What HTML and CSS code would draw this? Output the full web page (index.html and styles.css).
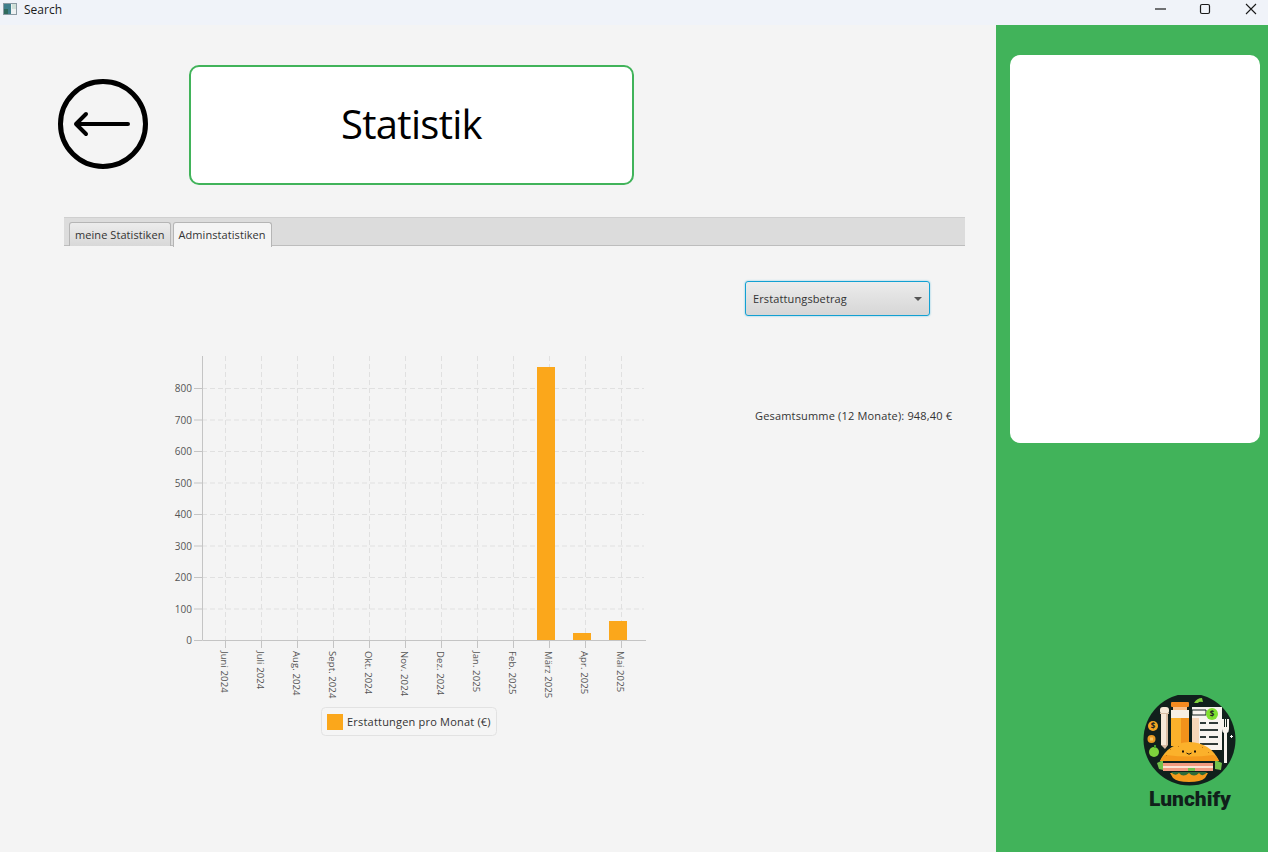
FILE: index.html
```html
<!DOCTYPE html>
<html lang="de">
<head>
  <meta charset="UTF-8">
  <title>Search</title>
  <link rel="stylesheet" href="styles.css">
</head>
<body>
  <!-- Title bar -->
  <div class="titlebar">
    <svg class="app-icon" width="16" height="16" viewBox="0 0 16 16">
      <rect x="2.500" y="2.500" width="13" height="11" fill="#eef1f2" stroke="#8b9aa3"/>
      <rect x="3" y="3" width="7" height="10" fill="#3f7f8c"/>
      <rect x="3" y="8" width="4" height="5" fill="#2f6a5c"/>
      <rect x="11" y="3" width="4" height="5" fill="#cfe0d8"/>
    </svg>
    <span class="app-title">Search</span>
    <div class="window-btns">
      <svg class="win-btn" width="46" height="18" viewBox="0 0 46 18"><path d="M25 9h11" stroke="#1a1a1a" stroke-width="1.200" fill="none"/></svg>
      <svg class="win-btn" width="46" height="18" viewBox="0 0 46 18"><rect x="24.500" y="4.500" width="9" height="9" rx="1.500" stroke="#1a1a1a" stroke-width="1.200" fill="none"/></svg>
      <svg class="win-btn" width="46" height="18" viewBox="0 0 46 18"><path d="M24 4l10 10M34 4L24 14" stroke="#1a1a1a" stroke-width="1.100" fill="none"/></svg>
    </div>
  </div>

  <div class="app">
    <main class="main">
      <!-- Header -->
      <header class="head">
        <svg class="back" width="92" height="92" viewBox="0 0 92 92">
          <circle cx="46" cy="46" r="42.500" fill="none" stroke="#000" stroke-width="5"/>
          <path d="M19 46H71M29 36L19 46L29 56" fill="none" stroke="#000" stroke-width="4" stroke-linecap="round" stroke-linejoin="round"/>
        </svg>
        <div class="title-box">Statistik</div>
      </header>

      <!-- Tabs -->
      <div class="tabs">
        <div class="tab">meine Statistiken</div>
        <div class="tab active">Adminstatistiken</div>
      </div>

      <div class="pane">
        <!-- Chart -->
        <svg class="chart" width="490" height="400" viewBox="0 0 490 400">
          <g class="grid">
            <path d="M45 260H487M45 228.500H487M45 197H487M45 165.500H487M45 134H487M45 102.500H487M45 71H487M45 39.500H487"/>
            <path d="M68.500 7V291M104.500 7V291M140.500 7V291M176.500 7V291M212.500 7V291M248.500 7V291M284.500 7V291M320.500 7V291M356.500 7V291M392.500 7V291M428.500 7V291M464.500 7V291"/>
          </g>
          <g class="axis">
            <path d="M45.500 7V291.500H489"/>
            <path d="M37 291.500h8M37 260h8M37 228.500h8M37 197h8M37 165.500h8M37 134h8M37 102.500h8M37 71h8M37 39.500h8"/>
            <path d="M68.500 291v8M104.500 291v8M140.500 291v8M176.500 291v8M212.500 291v8M248.500 291v8M284.500 291v8M320.500 291v8M356.500 291v8M392.500 291v8M428.500 291v8M464.500 291v8"/>
          </g>
          <rect class="bar" x="380" y="18" width="18" height="273"/>
          <rect class="bar" x="416" y="284" width="18" height="7"/>
          <rect class="bar" x="452" y="272" width="18" height="19"/>
          <g class="y-labels">
            <text x="35" y="295">0</text>
            <text x="35" y="263.500">100</text>
            <text x="35" y="232">200</text>
            <text x="35" y="200.500">300</text>
            <text x="35" y="169">400</text>
            <text x="35" y="137.500">500</text>
            <text x="35" y="106">600</text>
            <text x="35" y="74.500">700</text>
            <text x="35" y="43">800</text>
          </g>
          <g class="x-labels">
            <text transform="translate(64 302) rotate(90)">Juni 2024</text>
            <text transform="translate(100 302) rotate(90)">Juli 2024</text>
            <text transform="translate(136 302) rotate(90)">Aug. 2024</text>
            <text transform="translate(172 302) rotate(90)">Sept. 2024</text>
            <text transform="translate(208 302) rotate(90)">Okt. 2024</text>
            <text transform="translate(244 302) rotate(90)">Nov. 2024</text>
            <text transform="translate(280 302) rotate(90)">Dez. 2024</text>
            <text transform="translate(316 302) rotate(90)">Jan. 2025</text>
            <text transform="translate(352 302) rotate(90)">Feb. 2025</text>
            <text transform="translate(388 302) rotate(90)">März 2025</text>
            <text transform="translate(424 302) rotate(90)">Apr. 2025</text>
            <text transform="translate(460 302) rotate(90)">Mai 2025</text>
          </g>
          <rect class="legend" x="164.500" y="358.500" width="175" height="28" rx="4"/>
          <rect class="bar" x="170" y="365" width="16" height="16"/>
          <text class="legend-text" x="190" y="377">Erstattungen pro Monat (€)</text>
        </svg>

        <div class="side">
          <div class="select">
            <span>Erstattungsbetrag</span>
            <i class="caret"></i>
          </div>
          <p class="total">Gesamtsumme (12 Monate): 948,40 €</p>
        </div>
      </div>
    </main>

    <aside class="sidebar">
      <div class="card"></div>
      <div class="logo">
        <svg width="96" height="92" viewBox="0 0 96 92">
          <circle cx="47.500" cy="44.500" r="46" fill="#11201c"/>
          <!-- leaf on top -->
          <path d="M52 8q3-5 8-5l1 4q-4-1-5 1z" fill="#7ed23c"/>
          <!-- bottle -->
          <rect x="29" y="7" width="18" height="5" rx="1" fill="#f58a1f"/>
          <rect x="31" y="12" width="14" height="4" fill="#f9c08a"/>
          <rect x="29" y="15" width="18" height="8" fill="#f7efe4"/>
          <rect x="29" y="23" width="18" height="28" fill="#fbb12b"/>
          <rect x="39" y="23" width="8" height="28" fill="#f2921b"/>
          <!-- straw -->
          <rect x="18" y="12" width="9" height="7" rx="3" fill="#f6ead9"/>
          <rect x="19" y="19" width="7" height="31" fill="#f6ead9"/>
          <rect x="24" y="19" width="2" height="31" fill="#d9bfa5"/>
          <path d="M19 50h7l-3 4z" fill="#d9bfa5"/>
          <rect x="18" y="18" width="9" height="1" fill="#d9bfa5"/>
          <!-- coins and apple -->
          <circle cx="11" cy="31" r="5" fill="#f5a623"/>
          <text x="11" y="34" class="coin">$</text>
          <circle cx="9.500" cy="44" r="4" fill="#e89a25"/>
          <rect x="8" y="42.500" width="3" height="3" fill="#f7c564"/>
          <circle cx="12" cy="57" r="5" fill="#7ed23c"/>
          <rect x="12" y="50" width="2" height="3" fill="#3f9f31"/>
          <!-- menu -->
          <rect x="50" y="12" width="30" height="43" fill="#f7f3ee"/>
          <rect x="50" y="23" width="7" height="32" fill="#f6d6b8"/>
          <path d="M50 15h14v5H50z" fill="#f7f3ee" stroke="#11201c"/>
          <path d="M58 27h6v2h-6zM67 27h9v2h-9zM58 34h18v2H58zM58 41h6v2h-6zM67 41h9v2h-9zM58 48h18v2H58z" fill="#2f3a38"/>
          <circle cx="70" cy="19" r="6" fill="#7fe02f"/>
          <text x="70" y="22" class="coin">$</text>
          <!-- fork -->
          <path d="M80 24h2v8h1v-8h1v8h1v-8h2v10q0 3-2 4v30h-3V38q-2-1-2-4z" fill="#f7f3ee"/>
          <path d="M88 41h1v-1h1v1h1v1h-1v1h-1v-1h-1z" fill="#fff"/>
          <!-- lettuce ends -->
          <path d="M15 68l6-3v10l-4-1zM73 65l7 3l-1 7l-6-1z" fill="#74c34b"/>
          <!-- sandwich -->
          <path d="M18 66Q26 48 47.500 47Q69 48 77 66z" fill="#fbb12b"/>
          <path d="M18 66Q21 60 24 60Q48 63 71 60Q75 61 77 66z" fill="#f59a1c"/>
          <path d="M28 54h1v1h-1zM36 51h1v1h-1zM60 52h1v1h-1zM66 57h1v1h-1zM24 60h1v1h-1z" fill="#c77a12"/>
          <rect x="21" y="68" width="50" height="3" fill="#f39a80"/>
          <rect x="21" y="71" width="50" height="2" fill="#fde3d4"/>
          <rect x="21" y="73" width="25" height="3" fill="#f39a80"/>
          <rect x="53" y="73" width="18" height="3" fill="#f39a80"/>
          <rect x="46" y="73" width="7" height="3" fill="#74c34b"/>
          <path d="M28 78h38l-3 5q-4 4-16 4q-12 0-16-4z" fill="#f59a1c"/>
          <path d="M29 77q4 5 8 1q4 5 10 0q5 5 10 0q4 5 8-1z" fill="#2f6b3a"/>
          <!-- face -->
          <rect x="40" y="55.500" width="2" height="2" fill="#1a1208"/>
          <rect x="52" y="55.500" width="2" height="2" fill="#1a1208"/>
          <path d="M44.500 58q2.500 2.500 5 0" stroke="#1a1208" fill="none"/>
        </svg>
        <span class="logo-text">Lunchify</span>
      </div>
    </aside>
  </div>
</body>
</html>
```
FILE: styles.css
```css
* {
  box-sizing: border-box;
}
html, body {
  height: 100%;
}
body {
  margin: 0;
  overflow: hidden;
  font-family: 'Open Sans', 'Noto Sans', sans-serif;
  font-size: 12px;
  color: #333;
  background: #f4f4f4;
}
.titlebar {
  height: 25px;
  display: flex;
  align-items: center;
  padding-left: 1px;
  background: #f0f3f9;
  color: #1a1a1a;
}
.app-icon {
  margin: -7px 7px 0 0;
}
.app-title {
  font-size: 12px;
  margin-top: -7px;
}
.window-btns {
  margin-left: auto;
  display: flex;
  margin-top: -7px;
}
.win-btn {
  display: block;
}
.app {
  height: 827px;
  display: flex;
}
.main {
  width: 996px;
  padding: 40px 0 0 58px;
}
.head {
  display: flex;
  align-items: center;
  gap: 40px;
  margin-left: -1px;
}
.back {
  margin-top: -2px;
}
.title-box {
  width: 445px;
  height: 120px;
  padding-bottom: 3px;
  display: flex;
  align-items: center;
  justify-content: center;
  background: #fff;
  border: 2px solid #41b35a;
  border-radius: 10px;
  color: #000;
  font-size: 40px;
  letter-spacing: -0.7px;
}
.tabs {
  width: 901px;
  height: 29px;
  margin: 32px 0 0 6px;
  padding: 4px 0 0 5px;
  display: flex;
  gap: 2px;
  background: #dcdcdc;
  border-top: 1px solid #cfcfcf;
  border-bottom: 1px solid #bdbdbd;
}
.tab {
  height: 24px;
  padding: 4px 5px 0;
  border: 1px solid #b5b5b5;
  border-bottom: none;
  border-radius: 3px 3px 0 0;
  background: linear-gradient(#ececec, #d8d8d8);
  color: #333;
  font-size: 11px;
  letter-spacing: 0.07px;
}
.tab.active {
  height: 25px;
  background: #f4f4f4;
}
.pane {
  display: flex;
  margin-left: 99px;
}
.chart {
  display: block;
  margin-top: 103px;
  flex: none;
  width: 490px;
}
.side {
  margin-left: 98px;
  padding-top: 35px;
}
.select {
  width: 185px;
  height: 35px;
  display: flex;
  align-items: center;
  justify-content: space-between;
  padding: 0 7px;
  border: 1px solid #12a0d2;
  border-radius: 3px;
  box-shadow: 0 0 2px #6cc3e0;
  background: linear-gradient(#ececec, #d6d6d6);
  font-size: 11px;
  letter-spacing: 0.12px;
}
.caret {
  width: 0;
  height: 0;
  border: 4px solid transparent;
  border-top: 4px solid #555;
  border-bottom: 0;
}
.total {
  margin: 92px 0 0 10px;
  width: 210px;
  font-size: 11px;
  letter-spacing: 0.17px;
  white-space: nowrap;
}
.grid path {
  fill: none;
  stroke: #e0e0e0;
  stroke-dasharray: 5 3;
}
.axis path {
  fill: none;
  stroke: #c4c4c4;
}
.bar {
  fill: #fba71b;
}
.y-labels text {
  font-size: 10px;
  fill: #555;
  text-anchor: end;
}
.x-labels text {
  font-size: 9.500px;
  letter-spacing: 0.1px;
  fill: #555;
}
.legend {
  fill: #f5f5f5;
  stroke: #e2e2e2;
}
.legend-text {
  font-size: 11px;
  letter-spacing: 0.2px;
  fill: #333;
}
.sidebar {
  width: 272px;
  padding: 30px 8px 0 14px;
  background: #41b35a;
  display: flex;
  flex-direction: column;
}
.card {
  height: 388px;
  background: #fff;
  border-radius: 10px;
}
.logo {
  margin: 252px 22px 0 auto;
  display: flex;
  flex-direction: column;
  align-items: center;
  width: 96px;
}
.logo svg {
  display: block;
}
.coin {
  font-size: 8px;
  font-weight: 700;
  fill: #222;
  text-anchor: middle;
}
.logo-text {
  font-family: Roboto, sans-serif;
  font-weight: 900;
  font-size: 21px;
  line-height: 24px;
  color: #10201a;
}
```
